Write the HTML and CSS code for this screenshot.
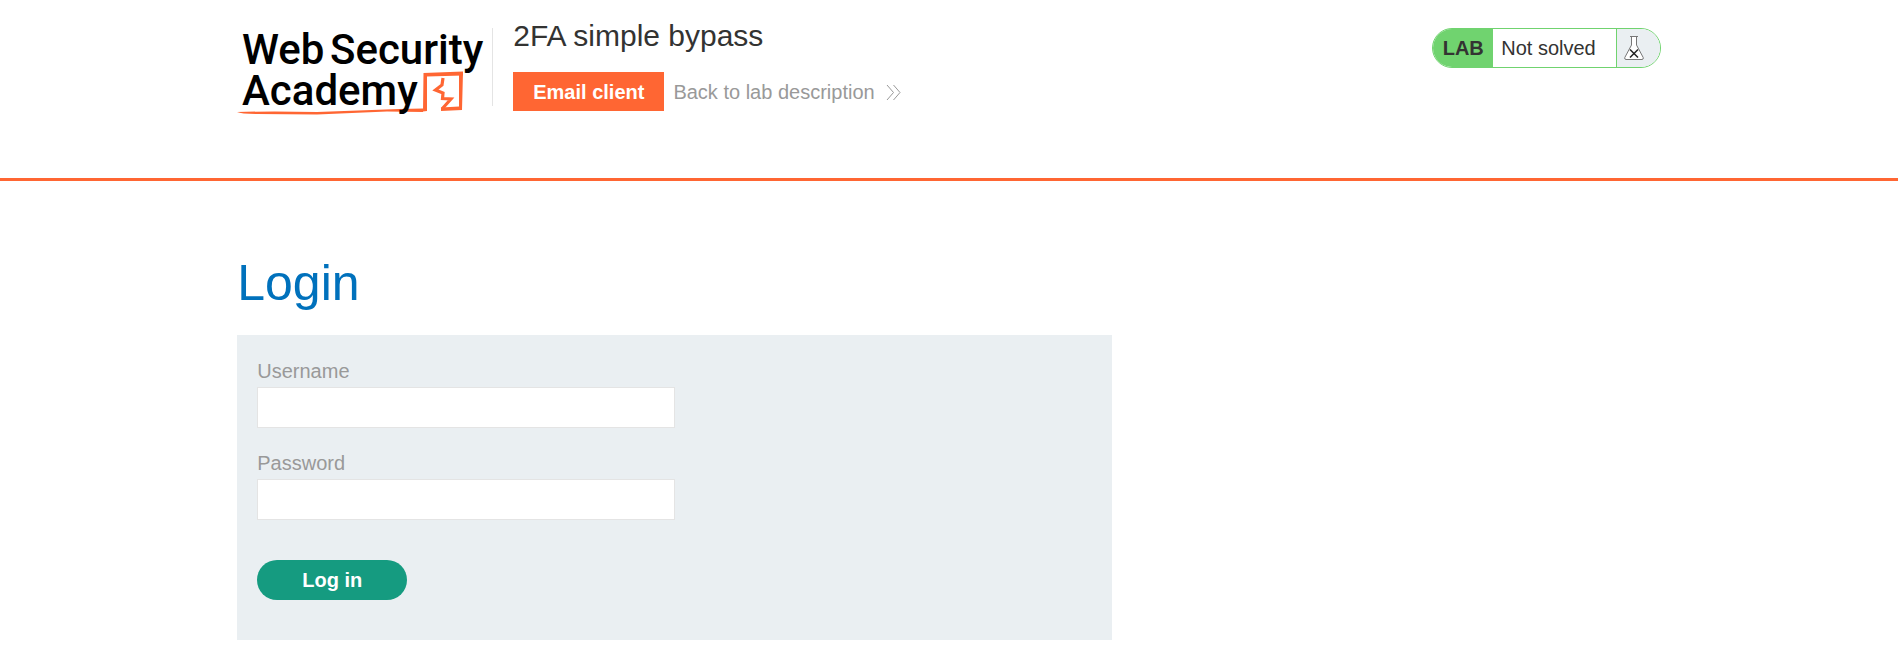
FILE: index.html
```html
<!DOCTYPE html>
<html lang="en">
<head>
<meta charset="utf-8">
<meta name="viewport" content="width=device-width, initial-scale=1">
<title>2FA simple bypass</title>
<link rel="stylesheet" href="styles.css">
</head>
<body>
<header class="lab-header">
  <div class="container header-row">
    <a class="logo" href="#" aria-label="Web Security Academy">
      <svg width="250" height="90" viewBox="0 0 250 90">
        <g fill="#ff6633">
          <path d="M0 84 Q35 83 80 84 L162 81 L186 80.500 L186 84 L150 83.500 L80 86.500 L20 86 Q4 86 0 84Z"/>
          <path d="M186.500 45 L226 43.500 L226 47.500 L190 48.500 L190 83 L186 83.500Z"/>
          <path d="M222 45 L226 44 L225 82 L204 83 L204 79.500 L222 78.500Z"/>
        </g>
        <path d="M206 50 L205 57 L198.500 62 L206 65 L205.500 70.500 L214 71 L205 81" fill="none" stroke="#ff6633" stroke-width="3.200"/>
        <g class="logo-text">
          <text x="5" y="36">Web</text>
          <text x="93" y="36">Security</text>
          <text x="5" y="77">Academy</text>
        </g>
      </svg>
    </a>
    <div class="title-block">
      <h2 class="lab-title">2FA simple bypass</h2>
      <div class="lab-links">
        <a class="email-button" href="#">Email client</a>
        <a class="back-link" href="#">Back to lab description
          <svg width="15" height="17" viewBox="0 0 15 17" fill="none" stroke="#999" stroke-width="1" aria-hidden="true"><path d="M1 1l6.500 7.500L1 16M7.500 1l6.500 7.500L7.500 16"/></svg>
        </a>
      </div>
    </div>
    <div class="lab-status">
      <span class="status-tag">LAB</span>
      <span class="status-text">Not solved</span>
      <span class="status-icon">
        <svg width="20" height="26" viewBox="0 0 20 26" fill="none" aria-hidden="true">
          <path d="M6 1.500H14M7.500 1.500V10L.8 22.500Q.3 24.500 2 24.500H18Q19.700 24.500 19.200 22.500L12.500 10V1.500" fill="#fff" stroke="#777"/>
          <path d="M6 14.500l8 8M14 14.500l-8 8" stroke="#222" stroke-width="1.500"/>
        </svg>
      </span>
    </div>
  </div>
</header>
<main class="container">
  <h1 class="page-title">Login</h1>
  <form class="login-form">
    <label for="username">Username</label>
    <input id="username" type="text" name="username">
    <label for="password">Password</label>
    <input id="password" type="password" name="password">
    <button type="submit">Log in</button>
  </form>
</main>
</body>
</html>
```
FILE: styles.css
```css
* {
  box-sizing: border-box;
}

body {
  margin: 0;
  background: #fff;
  color: #333332;
  font-family: "Liberation Sans", Arial, sans-serif;
  font-size: 20px;
  line-height: 24px;
}

.container {
  padding: 0 12.5%;
}

.lab-header {
  border-bottom: 3px solid #ff6633;
  padding-bottom: 60px;
}

.header-row {
  display: flex;
  align-items: flex-start;
}

.logo {
  display: block;
  flex: none;
  padding-top: 28px;
}

.logo svg {
  display: block;
  overflow: visible;
}

.logo-text {
  fill: #000;
  font-family: Roboto, sans-serif;
  font-size: 42px;
  font-weight: 500;
}

.title-block {
  display: flex;
  flex: 1;
  margin-top: 28px;
  margin-left: 5px;
  padding-left: 20px;
  height: 78px;
  border-left: 1px solid #e4e4e4;
  flex-direction: column;
  justify-content: flex-end;
}

.lab-title {
  margin: 0 0 16px;
  font-size: 30px;
  font-weight: 400;
  line-height: 40px;
}

.lab-links {
  display: flex;
  gap: 9px;
  margin-bottom: -5px;
}

.email-button {
  padding: 1px 20px 0;
  background: #ff6633;
  color: #fff;
  font-weight: 700;
  line-height: 38px;
  text-decoration: none;
}

.back-link {
  display: flex;
  align-items: center;
  gap: 11px;
  padding-top: 1px;
  color: #999;
  line-height: 38px;
  text-decoration: none;
}

.lab-status {
  display: flex;
  flex: none;
  height: 40px;
  margin-top: 28px;
  border: 1px solid #70d36f;
  border-radius: 20px;
  overflow: hidden;
  line-height: 38px;
}

.status-tag {
  width: 60px;
  background: #70d36f;
  font-weight: 700;
  text-align: center;
}

.status-text {
  padding: 0 20px 0 8px;
}

.status-icon {
  display: flex;
  width: 44px;
  padding-left: 7px;
  border-left: 1px solid #70d36f;
  background: #eaeff2;
  align-items: center;
}

.page-title {
  margin: 0;
  padding: 72px 0 22px;
  color: #0071bc;
  font-size: 50px;
  font-weight: 400;
  line-height: 60px;
}

.login-form {
  max-width: 875px;
  padding: 24px 20px 40px;
  background: #eaeff2;
}

.login-form label {
  display: block;
  margin-bottom: 4px;
  color: #999;
}

.login-form input {
  display: block;
  width: 50%;
  height: 41px;
  margin-bottom: 23px;
  padding: 0 10px;
  border: 1px solid #e4e4e4;
  border-radius: 0;
  background: #fff;
  font: inherit;
}

.login-form button {
  display: block;
  width: 150px;
  height: 40px;
  margin-top: 40px;
  border: 0;
  border-radius: 20px;
  background: #159b80;
  color: #fff;
  font: inherit;
  font-weight: 700;
}
```
